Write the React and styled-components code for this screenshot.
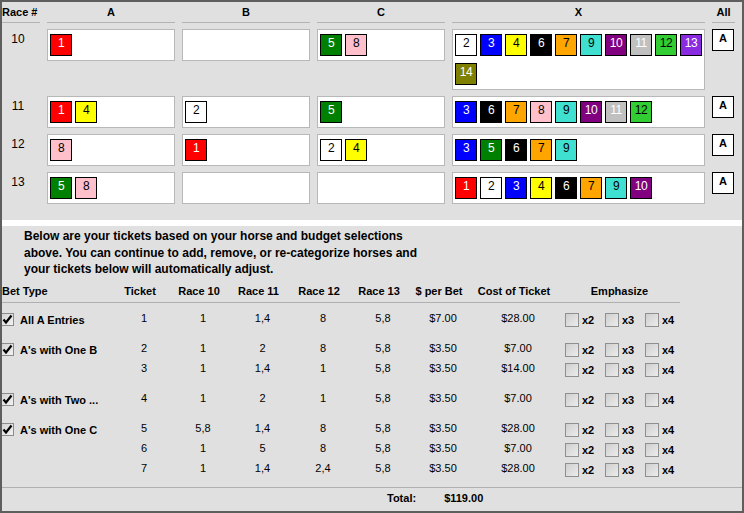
import React from "react";
import styled, { createGlobalStyle } from "styled-components";

const GlobalStyle = createGlobalStyle`
  body {
    margin: 0;
    background: #e0e0e0;
    font-family: "Liberation Sans", Arial, sans-serif;
  }
`;

const horseColors = {
  1: ["#ff0000", "#ffffff"],
  2: ["#ffffff", "#000000"],
  3: ["#0000ff", "#ffffff"],
  4: ["#ffff00", "#000000"],
  5: ["#008000", "#ffffff"],
  6: ["#000000", "#ffffff"],
  7: ["#ffa500", "#000000"],
  8: ["#ffc0cb", "#000000"],
  9: ["#40e0d0", "#000000"],
  10: ["#800080", "#ffffff"],
  11: ["#c0c0c0", "#ffffff"],
  12: ["#32cd32", "#000000"],
  13: ["#8a2be2", "#ffffff"],
  14: ["#808000", "#ffffff"],
};

const races = [
  { num: 10, a: [1], b: [], c: [5, 8], x: [2, 3, 4, 6, 7, 9, 10, 11, 12, 13, 14] },
  { num: 11, a: [1, 4], b: [2], c: [5], x: [3, 6, 7, 8, 9, 10, 11, 12] },
  { num: 12, a: [8], b: [1], c: [2, 4], x: [3, 5, 6, 7, 9] },
  { num: 13, a: [5, 8], b: [], c: [], x: [1, 2, 3, 4, 6, 7, 9, 10] },
];

const groups = [
  { label: "All A Entries", tickets: [["1", "1", "1,4", "8", "5,8", "$7.00", "$28.00"]] },
  {
    label: "A's with One B",
    tickets: [
      ["2", "1", "2", "8", "5,8", "$3.50", "$7.00"],
      ["3", "1", "1,4", "1", "5,8", "$3.50", "$14.00"],
    ],
  },
  { label: "A's with Two ...", tickets: [["4", "1", "2", "1", "5,8", "$3.50", "$7.00"]] },
  {
    label: "A's with One C",
    tickets: [
      ["5", "5,8", "1,4", "8", "5,8", "$3.50", "$28.00"],
      ["6", "1", "5", "8", "5,8", "$3.50", "$7.00"],
      ["7", "1", "1,4", "2,4", "5,8", "$3.50", "$28.00"],
    ],
  },
];

const headers = ["Ticket", "Race 10", "Race 11", "Race 12", "Race 13", "$ per Bet", "Cost of Ticket"];

const Check = () => (
  <svg width="11" height="11" viewBox="0 0 11 11">
    <path d="M1.5 5.5 L4 8.5 L9.5 1.5" fill="none" stroke="#000" strokeWidth="2.2" />
  </svg>
);

const App = () => {
  return (
    <Window>
      <GlobalStyle />
      <RaceSection>
        <RaceGrid>
          <ColHead $align="left">Race #</ColHead>
          <ColHead>A</ColHead>
          <ColHead>B</ColHead>
          <ColHead>C</ColHead>
          <ColHead>X</ColHead>
          <ColHead>All</ColHead>
          {races.map((r) => (
            <React.Fragment key={r.num}>
              <RaceNum>{r.num}</RaceNum>
              {[r.a, r.b, r.c, r.x].map((list, i) => (
                <HorseBox key={i}>
                  {list.map((h) => (
                    <Chip key={h} $bg={horseColors[h][0]} $fg={horseColors[h][1]}>
                      {h}
                    </Chip>
                  ))}
                </HorseBox>
              ))}
              <AllButton>A</AllButton>
            </React.Fragment>
          ))}
        </RaceGrid>
      </RaceSection>
      <Divider />
      <TicketSection>
        <Intro>
          Below are your tickets based on your horse and budget selections
          <br />
          above. You can continue to add, remove, or re-categorize horses and
          <br />
          your tickets below will automatically adjust.
        </Intro>
        <HeaderRow>
          <HeadCell $align="left">Bet Type</HeadCell>
          {headers.map((h) => (
            <HeadCell key={h}>{h}</HeadCell>
          ))}
          <HeadCell $shift>Emphasize</HeadCell>
        </HeaderRow>
        <Groups>
          {groups.map((g) => (
            <Group key={g.label}>
              {g.tickets.map((t, i) => (
                <TicketRow key={t[0]}>
                  <BetCell>
                    {i === 0 && (
                      <>
                        <BetCheck>
                          <Check />
                        </BetCheck>
                        <BetLabel>{g.label}</BetLabel>
                      </>
                    )}
                  </BetCell>
                  {t.map((v, j) => (
                    <ValueCell key={j}>{v}</ValueCell>
                  ))}
                  <EmphCell>
                    {["x2", "x3", "x4"].map((x) => (
                      <EmphOption key={x}>
                        <EmphBox />
                        <EmphLabel>{x}</EmphLabel>
                      </EmphOption>
                    ))}
                  </EmphCell>
                </TicketRow>
              ))}
            </Group>
          ))}
        </Groups>
        <TotalBar>
          <TotalText>Total:</TotalText>
          <TotalText>$119.00</TotalText>
        </TotalBar>
      </TicketSection>
    </Window>
  );
};

const Window = styled.div`
  width: 744px;
  height: 513px;
  box-sizing: border-box;
  border: 2px solid #5e5e5e;
  background: #e0e0e0;
  display: flex;
  flex-direction: column;
  overflow: hidden;
  color: #000;
`;

const RaceSection = styled.div`
  height: 218px;
  box-sizing: border-box;
`;

const RaceGrid = styled.div`
  display: grid;
  grid-template-columns: 38px 128px 128px 128px 253px 23px;
  column-gap: 7px;
  row-gap: 6px;
  align-items: start;
`;

const ColHead = styled.div`
  height: 20px;
  line-height: 20px;
  border-bottom: 1px solid #b4b4b4;
  font-size: 11px;
  font-weight: bold;
  text-align: ${(p) => (p.$align === "left" ? "left" : "center")};
  white-space: nowrap;
`;

const RaceNum = styled.div`
  font-size: 12px;
  padding-top: 3px;
  padding-right: 6px;
  text-align: center;
`;

const HorseBox = styled.div`
  background: #fff;
  border: 1px solid #b8b8b8;
  padding: 4px 2px;
  min-height: 22px;
  display: flex;
  flex-wrap: wrap;
  gap: 7px 3px;
`;

const Chip = styled.div`
  width: 22px;
  height: 22px;
  box-sizing: border-box;
  border: 1px solid #000;
  background: ${(p) => p.$bg};
  color: ${(p) => p.$fg};
  font-size: 12px;
  line-height: 17px;
  text-align: center;
  letter-spacing: -0.5px;
`;

const AllButton = styled.div`
  width: 22px;
  height: 22px;
  box-sizing: border-box;
  border: 1px solid #000;
  background: #fff;
  font-size: 11px;
  font-weight: bold;
  line-height: 16px;
  text-align: center;
`;

const Divider = styled.div`
  height: 6px;
  background: #fff;
`;

const TicketSection = styled.div`
  flex: 1;
  display: flex;
  flex-direction: column;
`;

const Intro = styled.p`
  margin: 0;
  padding: 2px 0 0 22px;
  font-size: 12px;
  font-weight: bold;
  line-height: 16.5px;
  white-space: nowrap;
`;

const rowColumns = "114px 48px 70px 49px 72px 48px 72px 78px 127px";

const HeaderRow = styled.div`
  width: 678px;
  margin-top: 3px;
  display: grid;
  grid-template-columns: ${rowColumns};
  align-items: center;
  height: 21px;
  border-bottom: 1px solid #b0b0b0;
`;

const HeadCell = styled.div`
  font-size: 11px;
  font-weight: bold;
  white-space: nowrap;
  text-align: ${(p) => (p.$align === "left" ? "left" : "center")};
  padding-left: ${(p) => (p.$shift ? "6px" : "0")};
`;

const Groups = styled.div`
  padding-top: 7px;
  display: flex;
  flex-direction: column;
  gap: 10px;
`;

const Group = styled.div`
  display: flex;
  flex-direction: column;
`;

const TicketRow = styled.div`
  display: grid;
  grid-template-columns: ${rowColumns};
  height: 20px;
  align-items: center;
`;

const BetCell = styled.div`
  display: flex;
  align-items: center;
  gap: 6px;
  margin-left: -1px;
`;

const BetCheck = styled.div`
  width: 13px;
  height: 13px;
  box-sizing: border-box;
  border: 1px solid #8c8c8c;
  background: linear-gradient(135deg, #d4d4d4, #f2f2f2);
  display: flex;
  align-items: center;
  justify-content: center;
`;

const BetLabel = styled.span`
  font-size: 11px;
  font-weight: bold;
  white-space: nowrap;
`;

const ValueCell = styled.div`
  font-size: 11px;
  text-align: center;
  padding-left: 8px;
  padding-bottom: 4px;
  white-space: nowrap;
`;

const EmphCell = styled.div`
  display: flex;
  padding-left: 12px;
  gap: 9px;
`;

const EmphOption = styled.div`
  display: flex;
  align-items: center;
  gap: 3px;
`;

const EmphBox = styled.div`
  width: 14px;
  height: 14px;
  box-sizing: border-box;
  border: 1px solid #8f8f8f;
  background: linear-gradient(135deg, #cfcfcf, #ececec);
`;

const EmphLabel = styled.span`
  font-size: 11px;
  font-weight: bold;
  width: 14px;
`;

const TotalBar = styled.div`
  margin-top: auto;
  border-top: 1px solid #b0b0b0;
  height: 20px;
  display: flex;
  align-items: center;
  padding: 0 0 3px 385px;
  gap: 28px;
`;

const TotalText = styled.span`
  font-size: 11px;
  font-weight: bold;
`;

export default App;
